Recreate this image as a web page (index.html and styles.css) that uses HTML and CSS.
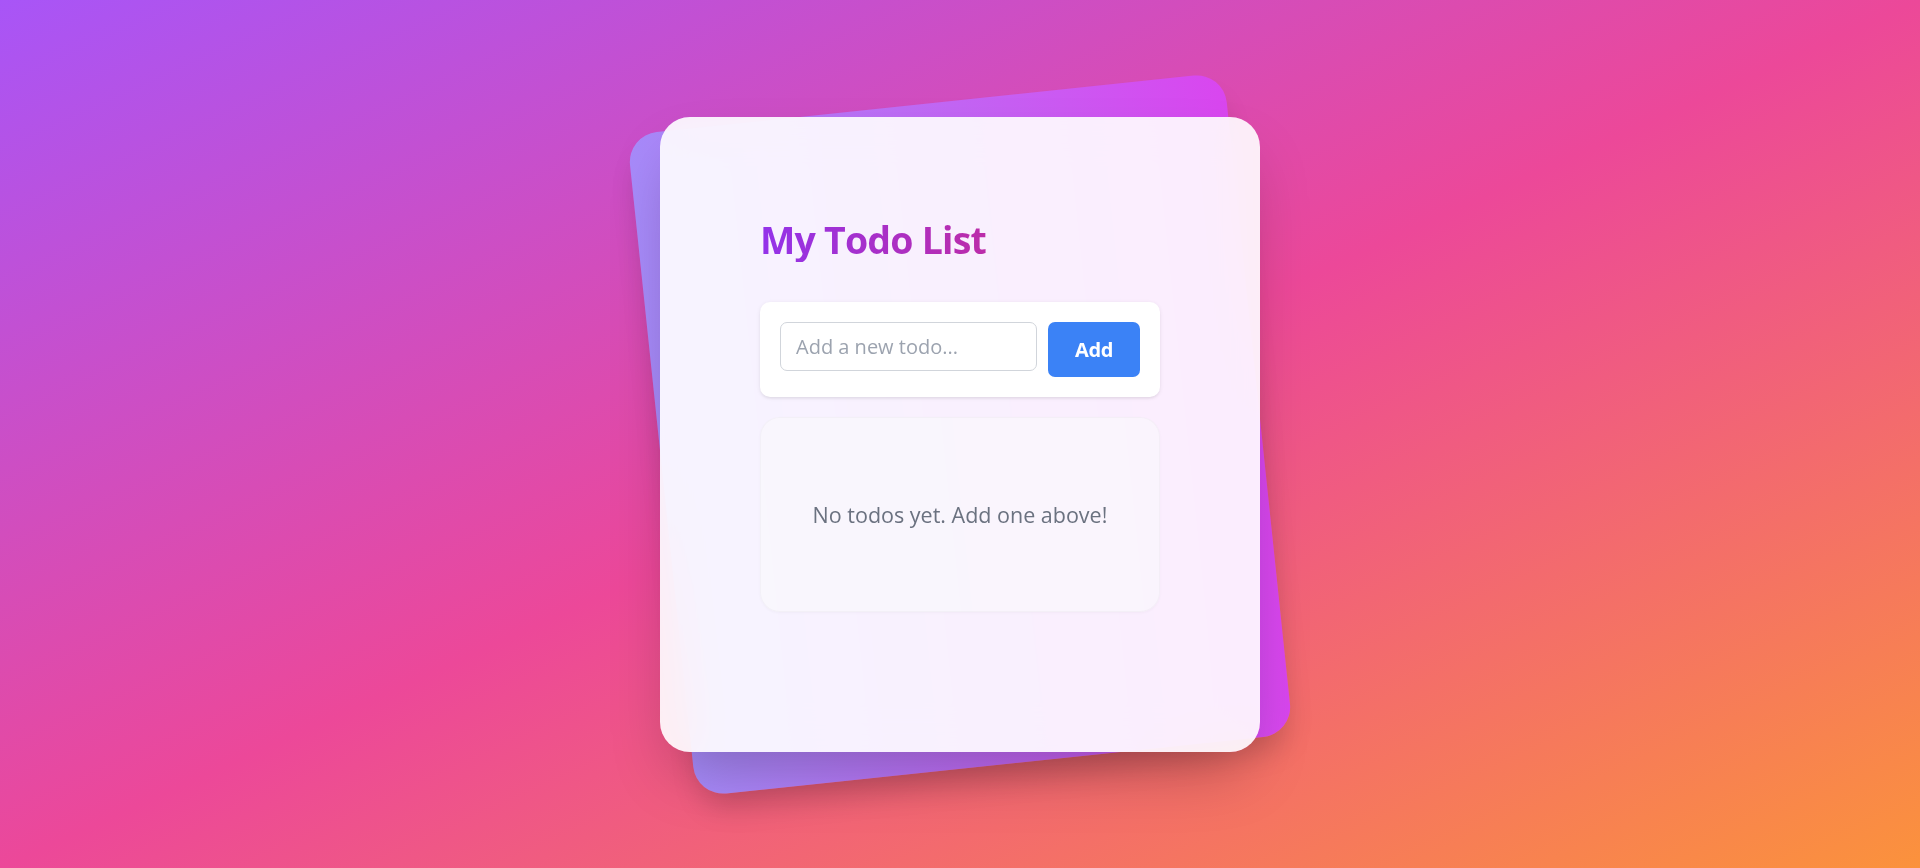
FILE: index.html
```html
<!DOCTYPE html>
<html lang="en">
<head>
<meta charset="utf-8">
<title>My Todo List</title>
<link rel="stylesheet" href="styles.css">
</head>
<body>
  <div class="page">
    <div class="stage">
      <div class="deck"></div>
      <main class="card">
        <h1 class="title">My Todo List</h1>
        <form class="composer">
          <input class="composer-input" type="text" placeholder="Add a new todo...">
          <button class="composer-btn" type="button">Add</button>
        </form>
        <section class="empty">
          <p class="empty-text">No todos yet. Add one above!</p>
        </section>
      </main>
    </div>
  </div>
</body>
</html>
```

FILE: styles.css
```css
* {
  box-sizing: border-box;
}

html, body {
  margin: 0;
  padding: 0;
}

body {
  font-family: "Open Sans", "Noto Sans", sans-serif;
  background: linear-gradient(to bottom right, #a855f7 0%, #ec4899 50%, #fb923c 100%);
  min-height: 100vh;
}

.page {
  min-height: 100vh;
  display: flex;
  align-items: center;
  justify-content: center;
}

.stage {
  position: relative;
  width: 600px;
}

.deck {
  position: absolute;
  left: 0;
  right: 0;
  top: -15px;
  bottom: -15px;
  border-radius: 30px;
  background: linear-gradient(to right, #a78bfa, #d946ef);
  transform: rotate(-6deg);
  box-shadow: 0 20px 30px -8px rgba(0, 0, 0, 0.18);
}

.card {
  position: relative;
  min-height: 635px;
  padding: 100px;
  border-radius: 30px;
  background: rgba(255, 255, 255, 0.9);
  -webkit-backdrop-filter: blur(20px);
  backdrop-filter: blur(20px);
  box-shadow: 0 31px 62px -15px rgba(0, 0, 0, 0.25);
}

.title {
  margin: 0 0 40px;
  font-size: 37.5px;
  line-height: 45px;
  font-weight: 700;
  letter-spacing: -0.8px;
  background: linear-gradient(to right, #9333ea, #db2777);
  -webkit-background-clip: text;
  background-clip: text;
  color: transparent;
}

.composer {
  display: flex;
  align-items: flex-start;
  gap: 11px;
  margin: 0 0 20px;
  padding: 20px;
  background: #ffffff;
  border-radius: 10px;
  box-shadow: 0 1px 4px rgba(0, 0, 0, 0.08), 0 2px 3px -1px rgba(0, 0, 0, 0.06);
}

.composer-input {
  flex: 1;
  min-width: 0;
  height: 49px;
  padding: 0 15px;
  border: 1px solid #d1d5db;
  border-radius: 7px;
  font-family: inherit;
  font-size: 20px;
  color: #374151;
  background: #ffffff;
  outline: none;
}

.composer-input::placeholder {
  color: #9ca3af;
}

.composer-btn {
  width: 92px;
  height: 55px;
  padding: 0;
  border: 0;
  border-radius: 7px;
  background: #3b82f6;
  color: #ffffff;
  font-family: inherit;
  font-size: 20px;
  font-weight: 700;
  letter-spacing: -0.3px;
  cursor: pointer;
}

.empty {
  padding: 79px 20px;
  border-radius: 20px;
  background: rgba(249, 250, 251, 0.55);
  border: 1px solid rgba(0, 0, 0, 0.025);
  box-shadow: 0 1px 3px rgba(0, 0, 0, 0.03);
  text-align: center;
}

.empty-text {
  margin: 0;
  font-size: 21.5px;
  line-height: 35px;
  color: #6b7280;
}
```
